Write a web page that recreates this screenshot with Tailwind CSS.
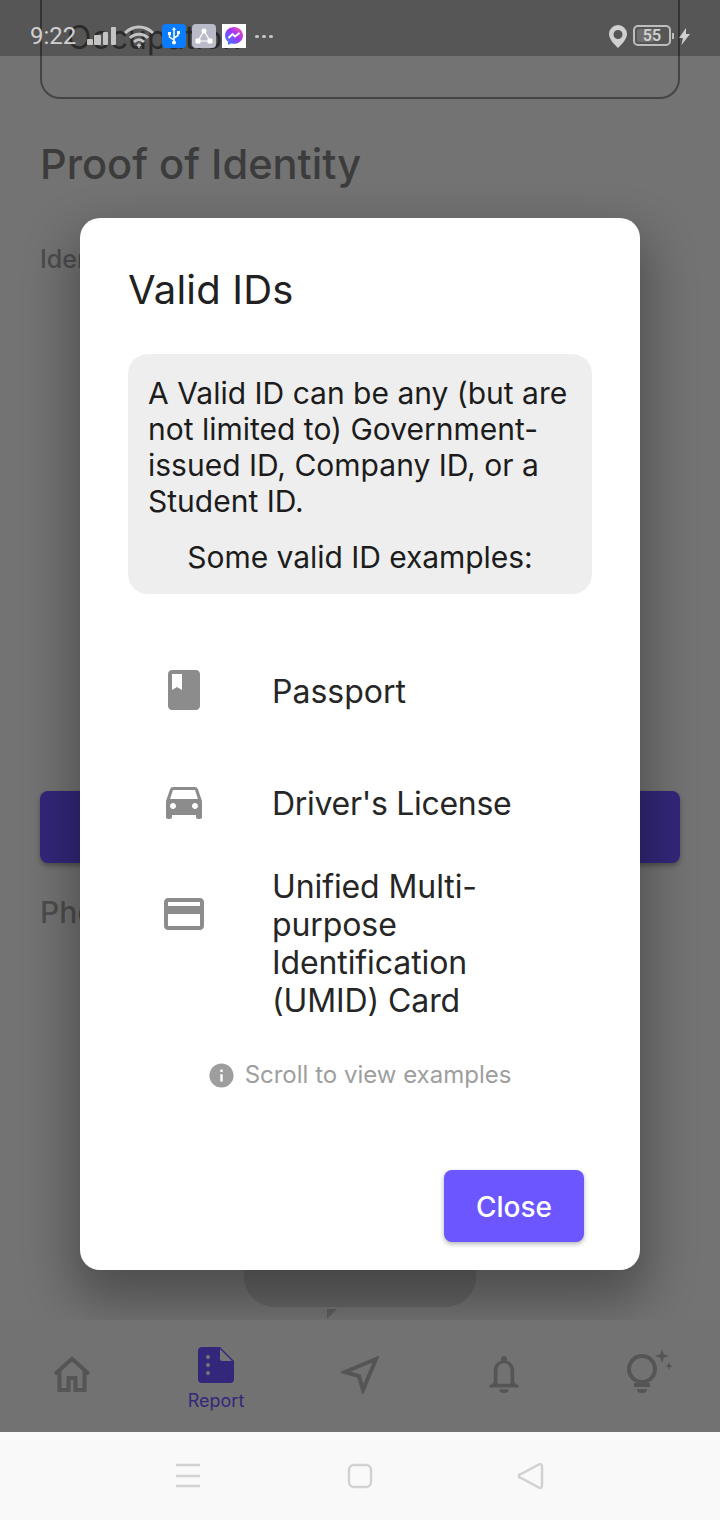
<!DOCTYPE html>
<html>
<head>
<meta charset="utf-8">
<script src="https://cdn.jsdelivr.net/npm/@tailwindcss/browser@4"></script>
</head>
<body class="m-0">
<div class="relative w-[720px] h-[1520px] overflow-hidden bg-[#737373] [font-family:Inter,sans-serif] flex flex-col">

  <!-- page behind the dialog -->
  <main class="flex-1 px-10 flex flex-col">
    <div class="h-[99px] border-2 border-t-0 border-[#454545] rounded-b-[20px] pl-[25px] pt-[18px] text-[32px] leading-[40px] text-[#3a3a3a]">Occupation</div>
    <h2 class="mt-[41px] text-[41.6px] leading-[48px] font-medium text-[#3c3c3c]">Proof of Identity</h2>
    <p class="mt-[56px] text-[25px] leading-[30px] font-medium text-[#4c4c4c]">Identification</p>
    <div class="mt-[517px] h-[72px] rounded-lg bg-[#32277a] shadow-[0_3px_5px_rgba(0,0,0,.3)]"></div>
    <p class="mt-[30px] text-[30px] leading-[38px] font-medium text-[#4d4d4d]">Phone</p>
    <div class="relative mt-[330px] ml-[204px] w-[232px] h-[46px] rounded-b-[30px] bg-[#666666]">
      <div class="absolute left-[83px] top-[48px] w-0 h-0 border-l-[10px] border-l-[#5e5e5e] border-b-[10px] border-b-transparent"></div>
    </div>
  </main>

  <!-- dialog -->
  <section class="absolute left-[80px] top-[218px] w-[560px] h-[1052px] bg-white rounded-[20px] shadow-[0_24px_50px_8px_rgba(0,0,0,.32)] pt-[48px] flex flex-col">
    <h1 class="pl-[48px] h-[48px] text-[40px] leading-[48px] tracking-[0.2px] text-[#212121]">Valid IDs</h1>
    <div class="mt-[40px] mx-[48px] h-[240px] rounded-[20px] bg-[#eeeeee] px-[20px] pt-[21px] text-[30px] leading-[36px] text-[#1c1c1c]">
      <p>A Valid ID can be any (but are not limited to) Government-issued ID, Company ID, or a Student ID.</p>
      <p class="mt-[20px] text-center tracking-[-0.05px]">Some valid ID examples:</p>
    </div>
    <ul class="mt-[41px] pl-[48px] text-[32px] leading-[38px] text-[#262626]">
      <li class="h-[112px] flex items-center">
        <div class="w-[112px] flex justify-center mb-[2px]">
          <svg class="w-12 h-12 fill-[#8c8c8c]" viewBox="0 0 24 24"><path d="M18 2H6c-1.1 0-2 .9-2 2v16c0 1.1.9 2 2 2h12c1.1 0 2-.9 2-2V4c0-1.1-.9-2-2-2zM6 4h5v8l-2.5-1.5L6 12V4z"/></svg>
        </div>
        <span class="ml-[33px] -translate-x-px translate-y-px">Passport</span>
      </li>
      <li class="h-[112px] flex items-center">
        <div class="w-[112px] flex justify-center mb-[4px]">
          <svg class="w-12 h-12 fill-[#8c8c8c]" viewBox="0 0 24 24"><path d="M18.92 6.01C18.72 5.42 18.16 5 17.5 5h-11c-.66 0-1.21.42-1.42 1.01L3 12v8c0 .55.45 1 1 1h1c.55 0 1-.45 1-1v-1h12v1c0 .55.45 1 1 1h1c.55 0 1-.45 1-1v-8l-2.08-5.99zM6.5 16c-.83 0-1.5-.67-1.5-1.5S5.67 13 6.5 13s1.5.67 1.5 1.5S7.33 16 6.5 16zm11 0c-.83 0-1.5-.67-1.5-1.5s.67-1.5 1.5-1.5 1.5.67 1.5 1.5-.67 1.5-1.5 1.5zM5 11l1.5-4.5h11L19 11H5z"/></svg>
        </div>
        <span class="ml-[32px] tracking-[-0.3px] translate-y-px">Driver's License</span>
      </li>
      <li class="flex items-start">
        <div class="w-[112px] h-[110px] flex items-center justify-center">
          <svg class="w-12 h-12 fill-[#8c8c8c]" viewBox="0 0 24 24"><path d="M20 4H4c-1.11 0-1.99.89-1.99 2L2 18c0 1.11.89 2 2 2h16c1.11 0 2-.89 2-2V6c0-1.11-.89-2-2-2zm0 14H4v-6h16v6zm0-10H4V6h16v2z"/></svg>
        </div>
        <span class="ml-[32px] mt-[9px] w-[260px] tracking-[-0.1px]">Unified Multi-purpose Identification (UMID) Card</span>
      </li>
    </ul>
    <div class="mt-[40px] h-[30px] flex items-center justify-center text-[24px] leading-[30px] text-[#9e9e9e]">
      <svg class="w-[29px] h-[29px] fill-[#9e9e9e] mr-[9px] -ml-[2px]" viewBox="0 0 24 24"><path d="M12 2C6.48 2 2 6.48 2 12s4.48 10 10 10 10-4.48 10-10S17.52 2 12 2zm1 15h-2v-6h2v6zm0-8h-2V7h2v2z"/></svg>
      <span>Scroll to view examples</span>
    </div>
    <div class="mt-[80px] pr-[56px] flex justify-end">
      <button class="w-[140px] h-[72px] pt-[2px] rounded-lg bg-[#6c56ff] text-white text-[28px] font-medium shadow-[0_2px_5px_rgba(0,0,0,.3)]">Close</button>
    </div>
  </section>

  <!-- bottom app bar -->
  <nav class="relative h-[112px] bg-[#727272] flex text-[#32277a]">
    <div class="flex-1 flex justify-center pt-[36px]">
      <svg class="w-[40px] h-[36px]" viewBox="0 0 40 36" fill="none" stroke="#555555" stroke-width="4"><path d="M3 18 20 3l17 15M7.500 15v19h9V22h7v12h9V15"/></svg>
    </div>
    <div class="flex-1 flex flex-col items-center pt-[27px]">
      <svg class="w-[36px] h-[36px]" viewBox="0 0 36 36"><path fill="#32277a" d="M4 0h18l14 14v18a4 4 0 0 1-4 4H4a4 4 0 0 1-4-4V4a4 4 0 0 1 4-4z"/><path fill="#757575" d="M22 2l12 12H24a2 2 0 0 1-2-2z"/><circle cx="10" cy="10" r="2" fill="#757575"/><circle cx="10" cy="18" r="2" fill="#757575"/><circle cx="10" cy="26" r="2" fill="#757575"/></svg>
      <span class="text-[18px] leading-[22px] mt-[7px]">Report</span>
    </div>
    <div class="flex-1 flex justify-center pt-[36px]">
      <svg class="w-[38px] h-[38px]" viewBox="0 0 38 38" fill="none" stroke="#555555" stroke-width="4"><path d="M35 3 4 16l14 4 4 14z"/></svg>
    </div>
    <div class="flex-1 flex justify-center pt-[35px]">
      <svg class="w-[32px] h-[39px] fill-[#555555]" viewBox="0 0 34 42"><path d="M17 1a3.500 3.500 0 0 1 3 5c5 1.500 8 6 8 11v13l5 3v2H1v-2l5-3V17c0-5 3-9.500 8-11a3.500 3.500 0 0 1 3-5zm0 8c-5 0-7 4-7 8v14h14V17c0-4-2-8-7-8zM12 37h10c0 3-2 4-5 4s-5-1-5-4z"/></svg>
    </div>
    <div class="flex-1 flex justify-center pt-[29px]">
      <svg class="w-[46px] h-[46px] ml-[2px]" viewBox="0 0 46 46"><circle cx="16" cy="20" r="13" fill="none" stroke="#555555" stroke-width="4"/><path fill="#555555" d="M8 34h16v4H8zM11 40h10c0 3-2 4-5 4s-5-1-5-4z"/><path fill="#555555" d="M36 0l1.800 5.200L43 7l-5.200 1.800L36 14l-1.800-5.200L29 7l5.200-1.800zM43 13l1 3 3 1-3 1-1 3-1-3-3-1 3-1z"/></svg>
    </div>
  </nav>

  <!-- system navigation bar -->
  <div class="relative h-[88px] bg-[#f9f9f9] flex items-center justify-center">
    <svg class="w-[720px] h-[88px]" viewBox="0 0 720 88" fill="none" stroke="#d2d2d2" stroke-width="2.500">
      <path d="M176 33h24M176 44h24M176 54h24"/>
      <rect x="349" y="33" width="22" height="22" rx="5"/>
      <path d="M542 34v20a2 2 0 0 1-3 1.700L521 46a2 2 0 0 1 0-4l18-9.700a2 2 0 0 1 3 1.700z"/>
    </svg>
  </div>

  <!-- status bar over everything -->
  <header class="absolute left-0 top-0 w-[720px] h-[56px] bg-black/25">
    <div class="relative h-full text-[#d0d0d0]">
      <span class="absolute left-[30px] top-[22px] text-[24px] leading-[28px] [font-family:Roboto,sans-serif]">9:22</span>
      <svg class="absolute left-[86px] top-[26px] w-[32px] h-[20px] fill-[#c4c4c4]" viewBox="0 0 32 20"><rect x="1" y="13" width="6" height="6" rx="1"/><rect x="8" y="9" width="7" height="10" rx="1"/><rect x="17" y="6" width="5" height="13" rx="1"/><rect x="25" y="1" width="5" height="18" rx="1"/></svg>
      <svg class="absolute left-[124px] top-[25px] w-[30px] h-[24px]" viewBox="0 0 30 24" fill="none" stroke="#c4c4c4" stroke-width="3"><path d="M1 8c8-8 20-8 28 0M6 13c5-5 13-5 18 0M10 17c3-3 7-3 10 0"/><path d="M15 19v4M13 21l2-2 2 2" stroke-width="1.500"/></svg>
      <div class="absolute left-[162px] top-[24px] w-[24px] h-[24px] rounded-[4px] bg-[#0a7cff] flex items-center justify-center">
        <svg class="w-[16px] h-[18px]" viewBox="0 0 16 18" fill="none" stroke="#ffffff" stroke-width="1.500"><path d="M8 2v14M8 13 3.500 10V7M8 11l4-2.500V6"/><path fill="#ffffff" stroke="none" d="M8 0l2 3H6zM2 5h3v3H2zM11 4h3v3h-3z"/><circle cx="8" cy="15.500" r="2" fill="#ffffff" stroke="none"/></svg>
      </div>
      <div class="absolute left-[192px] top-[24px] w-[24px] h-[24px] rounded-[4px] bg-[#b9bcc8] flex items-center justify-center">
        <svg class="w-[18px] h-[18px]" viewBox="0 0 18 18" fill="#ffffff" stroke="#ffffff"><path d="M9 4 3 14h12z" fill="none" stroke-width="1.200"/><circle cx="9" cy="4" r="2.500" stroke="none"/><rect x="0.500" y="11.500" width="5" height="5" rx="1" stroke="none"/><rect x="12.500" y="11.500" width="5" height="5" rx="1" stroke="none"/></svg>
      </div>
      <div class="absolute left-[222px] top-[24px] w-[24px] h-[24px] bg-white flex items-center justify-center">
        <svg class="w-[20px] h-[20px]" viewBox="0 0 20 20"><defs><linearGradient id="m" x1="0" y1="1" x2="1" y2="0"><stop offset="0" stop-color="#2a8cff"/><stop offset=".55" stop-color="#a033ff"/><stop offset="1" stop-color="#ff5c87"/></linearGradient></defs><path fill="url(#m)" d="M10 1c-5 0-9 3.700-9 8.500 0 2.600 1.100 4.800 3 6.300V19l3-1.600c.9.300 2 .4 3 .4 5 0 9-3.700 9-8.300S15 1 10 1z"/><path fill="none" stroke="#ffffff" stroke-width="1.800" d="M4.500 12 8.500 8l2.500 2.500L15.500 7"/></svg>
      </div>
      <span class="absolute left-[255px] top-[35px] flex gap-[3px]">
        <i class="block w-[4px] h-[3px] rounded-full bg-[#c4c4c4]"></i><i class="block w-[4px] h-[3px] rounded-full bg-[#c4c4c4]"></i><i class="block w-[4px] h-[3px] rounded-full bg-[#c4c4c4]"></i>
      </span>
      <svg class="absolute left-[609px] top-[24px] w-[18px] h-[24px]" viewBox="0 0 18 24"><path fill-rule="evenodd" fill="#d0d0d0" d="M9 1a9 9 0 0 0-9 9c0 5 5 10 9 14 4-4 9-9 9-14a9 9 0 0 0-9-9zm0 5a4.500 4.500 0 1 1 0 9 4.500 4.500 0 0 1 0-9z"/></svg>
      <div class="absolute left-[633px] top-[25px] w-[38px] h-[21px] rounded-[5px] border-2 border-[#bdbdbd] overflow-hidden flex items-center">
        <div class="absolute left-[2px] top-[2px] w-[17px] h-[13px] rounded-[2px] bg-[#6f6f6f]"></div>
        <span class="relative w-full text-center text-[16px] leading-[17px] font-semibold [font-family:Roboto,sans-serif]">55</span>
      </div>
      <div class="absolute left-[672px] top-[33px] w-[2px] h-[6px] bg-[#bdbdbd]"></div>
      <svg class="absolute left-[679px] top-[28px] w-[12px] h-[17px] fill-[#d0d0d0]" viewBox="0 0 12 17"><path d="M7 0 0 10h4l-1.500 7L11 6H7z"/></svg>
    </div>
  </header>
</div>
</body>
</html>
